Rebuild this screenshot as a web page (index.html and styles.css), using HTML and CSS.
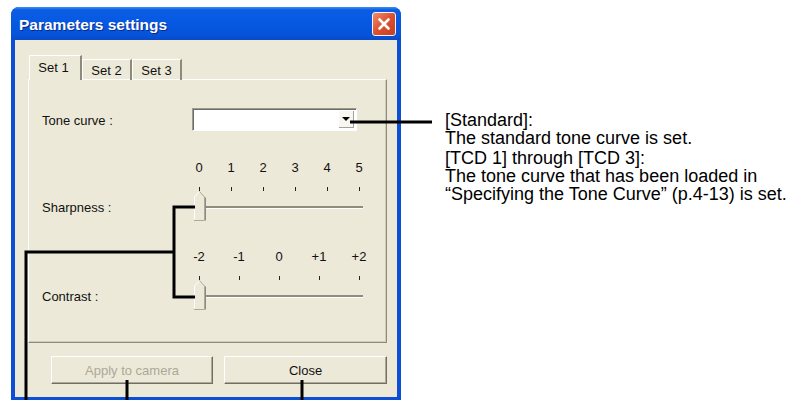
FILE: index.html
```html
<!DOCTYPE html>
<html lang="en">
<head>
    <meta charset="UTF-8">
    <meta name="viewport" content="width=device-width, initial-scale=1.0">
    <title>Parameters settings</title>
    <link rel="stylesheet" href="styles.css">
</head>
<body>
    <div class="page">
        <div class="window">
            <div class="titlebar">
                <span class="title">Parameters settings</span>
                <span class="close-btn">
                    <svg width="14" height="14" viewBox="0 0 14 14">
                        <path d="M2.5 2.5 L11.5 11.5 M11.5 2.5 L2.5 11.5" stroke="#fff" stroke-width="2.6" stroke-linecap="round"/>
                    </svg>
                </span>
            </div>
            <div class="client">
                <div class="tabs">
                    <div class="tab active">Set 1</div>
                    <div class="tab">Set 2</div>
                    <div class="tab">Set 3</div>
                </div>
                <div class="panel">
                    <div class="label combo-label">Tone curve :</div>
                    <div class="combo">
                        <span class="combo-btn"><span class="arrow"></span></span>
                    </div>

                    <div class="label slider-label">Sharpness :</div>
                    <div class="slider">
                        <div class="scale">
                            <span>0</span><span>1</span><span>2</span><span>3</span><span>4</span><span>5</span>
                        </div>
                        <div class="ticks">
                            <span></span><span></span><span></span><span></span><span></span><span></span>
                        </div>
                        <div class="track-area">
                            <div class="track"></div>
                            <svg class="thumb" width="14" height="30" viewBox="0 0 14 30">
                                <path d="M1.5 29 V6 L6.5 0.5 L11.5 6 V29 Z" fill="#ece9d8"/>
                                <path d="M1.5 28.5 V6 L6.5 0.5" fill="none" stroke="#fff" stroke-width="1"/>
                                <path d="M6.5 0.5 L11.5 6 V29.5 H1" fill="none" stroke="#aca899" stroke-width="1"/>
                                <path d="M12.5 6.5 V29.5" stroke="#8d8b80" stroke-width="1"/>
                            </svg>
                        </div>
                    </div>

                    <div class="label slider-label">Contrast :</div>
                    <div class="slider">
                        <div class="scale">
                            <span>-2</span><span>-1</span><span>0</span><span>+1</span><span>+2</span>
                        </div>
                        <div class="ticks">
                            <span></span><span></span><span></span><span></span><span></span>
                        </div>
                        <div class="track-area">
                            <div class="track"></div>
                            <svg class="thumb" width="14" height="30" viewBox="0 0 14 30">
                                <path d="M1.5 29 V6 L6.5 0.5 L11.5 6 V29 Z" fill="#ece9d8"/>
                                <path d="M1.5 28.5 V6 L6.5 0.5" fill="none" stroke="#fff" stroke-width="1"/>
                                <path d="M6.5 0.5 L11.5 6 V29.5 H1" fill="none" stroke="#aca899" stroke-width="1"/>
                                <path d="M12.5 6.5 V29.5" stroke="#8d8b80" stroke-width="1"/>
                            </svg>
                        </div>
                    </div>
                </div>
                <div class="buttons">
                    <button class="btn apply" disabled>Apply to camera</button>
                    <button class="btn close">Close</button>
                </div>
            </div>
        </div>

        <div class="notes">
            <p>[Standard]:<br>The standard tone curve is set.</p>
            <p>[TCD 1] through [TCD 3]:<br>The tone curve that has been loaded in<br>“Specifying the Tone Curve” (p.4-13) is set.</p>
        </div>

        <!-- callout lines drawn over the dialog -->
        <svg class="callouts" width="803" height="400" viewBox="0 0 803 400">
            <g fill="none" stroke="#000" stroke-width="3">
                <path d="M350 122 H432"/>
                <path d="M195 207 H174 V297 H195"/>
                <path d="M174 252 H26 V400"/>
                <path d="M127 380 V400"/>
                <path d="M302 380 V400"/>
            </g>
        </svg>
    </div>
</body>
</html>
```

FILE: styles.css
```css
body {
    margin: 0;
    background-color: #fff;
    font-family: "Liberation Sans", Arial, sans-serif;
}

.page {
    position: relative;
    display: flex;
    align-items: flex-start;
    width: 803px;
    height: 400px;
    padding: 7px 0 0 11px;
    box-sizing: border-box;
    overflow: hidden;
}

.window {
    display: flex;
    flex-direction: column;
    flex: none;
    width: 390px;
    height: 393px;
    background-color: #0c4fd6;
    border-radius: 8px 8px 0 0;
    overflow: hidden;
}

.titlebar {
    display: flex;
    align-items: center;
    justify-content: space-between;
    flex: none;
    height: 33px;
    padding: 0 5px 0 8px;
    background: linear-gradient(180deg, #3f8ef6 0, #0b5de2 3px, #0659e3 45%, #0553d9 85%, #0a49c6 100%);
}

.title {
    color: #fff;
    font-size: 15.5px;
    font-weight: bold;
    text-shadow: 1px 1px 0 #0b2a8a;
    padding-top: 2px;
}

.close-btn {
    display: flex;
    align-items: center;
    justify-content: center;
    width: 22px;
    height: 22px;
    border: 1px solid #f4f4f4;
    border-radius: 3px;
    background: linear-gradient(135deg, #f08d70, #dc5030 50%, #c53d20);
}

.client {
    flex: 1;
    margin: 0 4px 3px;
    padding: 15px 10px 0 13px;
    background-color: #ece9d8;
}

.tabs {
    position: relative;
    z-index: 1;
    display: flex;
    align-items: flex-end;
    height: 25px;
    margin-bottom: -1px;
    padding-left: 1px;
}

.tab {
    display: flex;
    align-items: center;
    justify-content: center;
    width: 50px;
    height: 21px;
    box-sizing: border-box;
    border-top: 1px solid #fff;
    border-left: 1px solid #fff;
    border-right: 2px solid #8d8b80;
    font-size: 13px;
    color: #111;
}

.tab.active {
    width: 53px;
    height: 25px;
    padding: 0 3px 2px 0;
    background-color: #ece9d8;
}

.panel {
    display: grid;
    grid-template-columns: 147px 180px;
    align-content: start;
    height: 264px;
    box-sizing: border-box;
    padding: 28px 0 0 13px;
    border: 1px solid;
    border-color: #fff #8d8b80 #8d8b80 #fff;
    box-shadow: inset -1px -1px 0 #cfccbd;
}

.label {
    font-size: 13px;
    line-height: 16px;
    color: #111;
}

.combo-label {
    align-self: center;
    padding-top: 3px;
}

.slider-label {
    align-self: end;
    margin-bottom: 5px;
}

.combo {
    display: flex;
    justify-content: flex-end;
    width: 165px;
    height: 23px;
    margin-left: 3px;
    box-sizing: border-box;
    padding: 2px;
    border: 1px solid;
    border-color: #9c9a8e #fff #fff #9c9a8e;
    box-shadow: inset 1px 1px 0 #6f6d63;
    background-color: #fff;
}

.combo-btn {
    display: flex;
    align-items: center;
    justify-content: center;
    width: 15px;
    box-sizing: border-box;
    border-right: 1px solid #a5a397;
    border-bottom: 1px solid #a5a397;
    background-color: #f7f6f1;
}

.arrow {
    width: 0;
    height: 0;
    border-left: 4px solid transparent;
    border-right: 4px solid transparent;
    border-top: 4px solid #000;
}

.slider {
    margin-top: 30px;
}

.slider + .label + .slider {
    margin-top: 29px;
}

.scale,
.ticks {
    display: flex;
    justify-content: space-between;
}

.scale span {
    width: 20px;
    font-size: 13px;
    line-height: 14px;
    text-align: center;
    color: #111;
}

.ticks {
    align-items: flex-end;
    height: 16px;
}

.ticks span {
    width: 20px;
    height: 4px;
    background: linear-gradient(#222, #222) center / 1px 100% no-repeat;
}

.track-area {
    position: relative;
    height: 30px;
    padding-top: 15px;
    box-sizing: border-box;
}

.track {
    height: 2px;
    margin: 0 6px 0 7px;
    background-color: #8f8d80;
    box-shadow: 0 1px 0 #fff;
}

.thumb {
    position: absolute;
    top: 0;
    left: 4px;
}

.buttons {
    display: flex;
    justify-content: flex-end;
    gap: 11px;
    margin-top: 13px;
}

.btn {
    width: 163px;
    height: 28px;
    padding: 0;
    font-family: "Liberation Sans", Arial, sans-serif;
    font-size: 13px;
    color: #111;
    background-color: #ece9d8;
    border: 1px solid;
    border-color: #fff #716f64 #716f64 #fff;
    box-shadow: inset -1px -1px 0 #aca899;
}

.btn.apply {
    width: 162px;
    color: #aca899;
}

.notes {
    margin: 104px 0 0 44px;
    font-size: 18px;
    line-height: 18px;
    color: #000;
}

.notes p {
    margin: 0 0 2px;
}

.callouts {
    position: absolute;
    top: 0;
    left: 0;
    pointer-events: none;
}
```
